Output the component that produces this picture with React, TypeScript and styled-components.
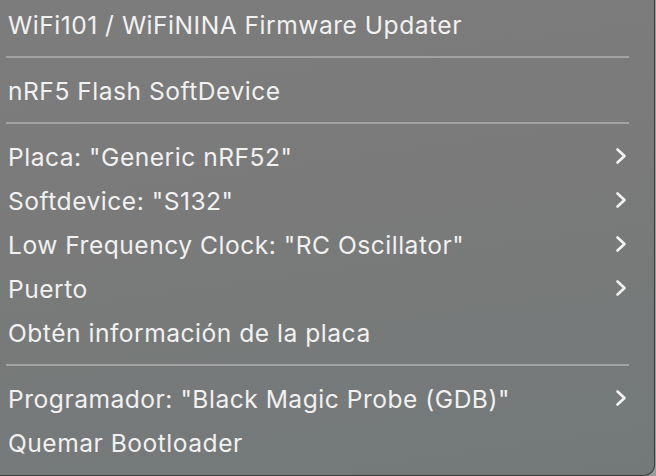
import styled, { createGlobalStyle } from 'styled-components';

const GlobalStyle = createGlobalStyle`
  html, body {
    margin: 0;
    padding: 0;
    background: #9b9d9d;
  }
  body {
    font-family: Inter, "Noto Sans", "Liberation Sans", sans-serif;
  }
`;

const Menu = styled.div`
  width: 654px;
  height: 473px;
  box-sizing: content-box;
  display: flex;
  flex-direction: column;
  padding-top: 2px;
  background: linear-gradient(172deg, #7c7c7c 0%, #7a7a7a 45%, #737979 100%);
  border-right: 1px solid #3c3e3e;
  border-bottom: 1px solid #3c3e3e;
  border-bottom-right-radius: 11px;
  overflow: hidden;
`;

const Item = styled.div`
  height: 44px;
  box-sizing: border-box;
  display: flex;
  align-items: center;
  justify-content: space-between;
  padding: 2px 27px 0 8px;
  color: #f1f1f1;
  font-size: 24.6px;
  letter-spacing: 0.5px;
  white-space: nowrap;

  svg {
    margin-top: -2px;
  }
`;

const Separator = styled.div`
  height: 22px;
  display: flex;
  align-items: center;

  &::after {
    content: '';
    display: block;
    margin: 0 25px 0 6px;
    flex: 1;
    height: 2px;
    background: #a2a2a2;
  }
`;

const Chevron = () => (
  <svg width="12" height="18" viewBox="0 0 12 18" fill="none">
    <polyline
      points="2.5,2.5 9.5,9 2.5,15.5"
      stroke="#f4f4f4"
      strokeWidth="2.6"
      strokeLinecap="round"
      strokeLinejoin="round"
    />
  </svg>
);

type Entry = { label: string; submenu?: boolean } | 'sep';

const entries: Entry[] = [
  { label: 'WiFi101 / WiFiNINA Firmware Updater' },
  'sep',
  { label: 'nRF5 Flash SoftDevice' },
  'sep',
  { label: 'Placa: "Generic nRF52"', submenu: true },
  { label: 'Softdevice: "S132"', submenu: true },
  { label: 'Low Frequency Clock: "RC Oscillator"', submenu: true },
  { label: 'Puerto', submenu: true },
  { label: 'Obtén información de la placa' },
  'sep',
  { label: 'Programador: "Black Magic Probe (GDB)"', submenu: true },
  { label: 'Quemar Bootloader' },
];

export default function App() {
  return (
    <>
      <GlobalStyle />
      <Menu>
        {entries.map((e, i) =>
          e === 'sep' ? (
            <Separator key={i} />
          ) : (
            <Item key={i}>
              <span>{e.label}</span>
              {e.submenu && <Chevron />}
            </Item>
          )
        )}
      </Menu>
    </>
  );
}
